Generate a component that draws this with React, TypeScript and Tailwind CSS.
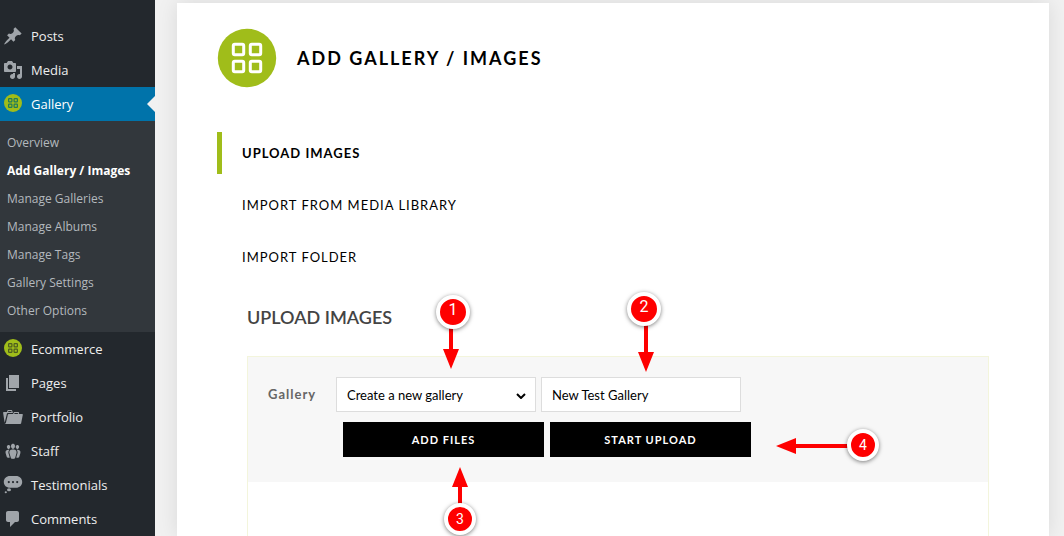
import React from 'react';
import clsx from 'clsx';

const paths = {
    pin: 'M10.44 3.02l1.82-1.82 6.36 6.35-1.83 1.82c-1.05-.68-2.48-.57-3.41.36l-.75.75c-.92.93-1.04 2.35-.35 3.41l-1.83 1.82-2.41-2.41-2.8 2.79c-.42.42-3.38 2.71-3.8 2.29s1.86-3.39 2.28-3.81l2.79-2.79L4.1 9.36l1.83-1.82c1.05.69 2.48.57 3.4-.36l.75-.75c.93-.92 1.05-2.35.36-3.41z',
    media: 'M13 11V4c0-.55-.45-1-1-1h-1.67L9 1H5L3.67 3H2c-.55 0-1 .45-1 1v7c0 .55.45 1 1 1h10c.55 0 1-.45 1-1zM7 4.5c1.38 0 2.5 1.12 2.5 2.5S8.38 9.5 7 9.5 4.5 8.38 4.5 7 5.62 4.5 7 4.5zM14 6h5v10.5c0 1.38-1.12 2.5-2.5 2.5S14 17.88 14 16.5s1.12-2.5 2.5-2.5c.17 0 .34.02.5.05V9h-3V6zm-4 8.05V13h2v3.5c0 1.38-1.12 2.5-2.5 2.5S7 17.88 7 16.5 8.12 14 9.5 14c.17 0 .34.02.5.05z',
    pages: 'M6 15V2h10v13H6zm-1 1h8v2H3V5h2v11z',
    portfolio: 'M4 5H.78c-.37 0-.74.32-.69.84l1.56 9.99S3.5 8.47 3.86 6.7c.11-.53.61-.7.98-.7H10s-.7-2.08-.77-2.31C9.11 3.25 8.89 3 8.45 3H5.14c-.36 0-.7.23-.8.64C4.25 4.04 4 5 4 5zm4.88 0h-4s.42-1 .87-1h2.13c.48 0 1 1 1 1zM2.67 16.25c-.31.47-.76.75-1.26.75h15.73c.54 0 .92-.31 1.03-.83.44-2.19 1.68-8.44 1.68-8.44.07-.5-.3-.73-.62-.73H16V5.53c0-.16-.26-.53-.66-.53h-3.76c-.52 0-.87.58-.87.58L10 7H5.59c-.32 0-.63.19-.69.5 0 0-1.59 6.7-1.72 7.33-.07.37-.22.99-.51 1.42zM15.38 7H11s.58-1 1.13-1h2.29c.71 0 .96 1 .96 1z',
    staff: 'M8.03 4.46c-.29 1.28.55 3.46 1.97 3.46 1.41 0 2.25-2.18 1.96-3.46-.22-.98-1.08-1.63-1.96-1.63-.89 0-1.74.65-1.97 1.63zm-4.13.9c-.25 1.08.47 2.93 1.67 2.93s1.92-1.85 1.67-2.93c-.19-.83-.92-1.39-1.67-1.39s-1.48.56-1.67 1.39zm8.86 0c-.25 1.08.47 2.93 1.66 2.93 1.2 0 1.92-1.85 1.67-2.93-.19-.83-.92-1.39-1.67-1.39-.74 0-1.47.56-1.66 1.39zm-.59 11.43l1.25-4.3C14.2 10 12.71 8.47 10 8.47c-2.72 0-4.21 1.53-3.44 4.02l1.26 4.3C8.05 17.51 9 18 10 18c.98 0 1.94-.49 2.17-1.21zm-6.1-7.63c-.49.67-.96 1.83-.42 3.59l1.12 3.79c-.34.2-.77.31-1.2.31-.85 0-1.65-.41-1.85-1.03l-1.07-3.65c-.65-2.11.61-3.4 2.92-3.4.27 0 .54.02.79.06-.1.1-.2.22-.29.33zm8.35-.39c2.31 0 3.58 1.29 2.92 3.4l-1.07 3.65c-.2.62-1 1.03-1.85 1.03-.43 0-.86-.11-1.2-.31l1.11-3.77c.55-1.78.08-2.94-.42-3.61-.08-.11-.18-.23-.28-.33.25-.04.51-.06.79-.06z',
    testimonials: 'M7 1h6c3.6 0 6.2 2.6 6.2 6S16.600 12.800 13 12.800H7C3.400 12.800.8 10.400.8 7S3.400 1 7 1zM5.800 6a1.100 1.100 0 1 0 0 2.200 1.100 1.100 0 0 0 0-2.200zm4.200 0a1.100 1.100 0 1 0 0 2.200 1.100 1.100 0 0 0 0-2.200zm4.200 0a1.100 1.100 0 1 0 0 2.200 1.100 1.100 0 0 0 0-2.200zM6 13.300a2 1.500 0 1 0 0 3 2 1.500 0 0 0 0-3zM2.800 16.200a1.100 1 0 1 0 0 2 1.100 1 0 0 0 0-2z',
    comments: 'M5 2h9c1.1 0 2 .9 2 2v7c0 1.1-.9 2-2 2h-2l-5 5v-5H5c-1.1 0-2-.9-2-2V4c0-1.1.9-2 2-2z',
};

type IconName = keyof typeof paths | 'grid';

const MenuIcon = ({ name, active }: { name: IconName; active?: boolean }) => {
    if (name === 'grid') {
        return (
            <svg viewBox="0 0 20 20" className="w-5 h-5 shrink-0" aria-hidden="true">
                <circle cx="10" cy="9" r="9" fill="#a0bd1a" />
                <g fill="none" stroke={active ? '#1f7a5c' : '#4d5c20'} strokeWidth="1.2">
                    <rect x="5.6" y="4.6" width="3.3" height="3.3" rx="0.6" />
                    <rect x="11.1" y="4.6" width="3.3" height="3.3" rx="0.6" />
                    <rect x="5.6" y="10.1" width="3.3" height="3.3" rx="0.6" />
                    <rect x="11.1" y="10.1" width="3.3" height="3.3" rx="0.6" />
                </g>
            </svg>
        );
    }
    return (
        <svg viewBox="0 0 20 20" className="w-5 h-5 shrink-0 fill-[#a0a5aa]" aria-hidden="true">
            <path d={paths[name]} fillRule="evenodd" />
        </svg>
    );
};

const menu: { label: string; icon: IconName; sub?: string[] }[] = [
    { label: 'Posts', icon: 'pin' },
    { label: 'Media', icon: 'media' },
    {
        label: 'Gallery',
        icon: 'grid',
        sub: ['Overview', 'Add Gallery / Images', 'Manage Galleries', 'Manage Albums', 'Manage Tags', 'Gallery Settings', 'Other Options'],
    },
    { label: 'Ecommerce', icon: 'grid' },
    { label: 'Pages', icon: 'pages' },
    { label: 'Portfolio', icon: 'portfolio' },
    { label: 'Staff', icon: 'staff' },
    { label: 'Testimonials', icon: 'testimonials' },
    { label: 'Comments', icon: 'comments' },
];

const Sidebar = () => (
    <nav className="w-[155px] shrink-0 bg-[#23282d] pt-[19px] font-['Open_Sans',sans-serif]">
        <ul>
            {menu.map(m => (
                <li key={m.label}>
                    <a
                        href="#"
                        className={clsx('relative flex items-center gap-2 h-[34px] pl-[3px] text-[13px] font-medium', m.sub ? 'bg-[#0073aa] text-white' : 'text-[#eee]')}
                    >
                        <MenuIcon name={m.icon} active={!!m.sub} />
                        <span className="pt-[2px]">{m.label}</span>
                        {m.sub && <span className="absolute right-0 top-[9px] border-y-8 border-r-8 border-y-transparent border-r-[#f1f1f1]" />}
                    </a>
                    {m.sub && (
                        <ul className="bg-[#32373c] pt-[7px] pb-2">
                            {m.sub.map(s => (
                                <li key={s}>
                                    <a
                                        href="#"
                                        className={clsx('flex items-center h-7 pt-[2px] pl-[7px] text-[12px]', s === 'Add Gallery / Images' ? 'font-bold text-white' : 'font-medium text-[#b4b9be]')}
                                    >
                                        {s}
                                    </a>
                                </li>
                            ))}
                        </ul>
                    )}
                </li>
            ))}
        </ul>
    </nav>
);

const arrows = {
    down: 'M-2 0h4v-60h-4zM-8 0H8L0 20z',
    up: 'M-2 0h4v60h-4zM-8 0H8L0-20z',
    left: 'M0-2v4h60v-4zM0-8V8L-20 0z',
};

// Numbered marker with an arrow that points at a control
const Callout = ({ n, dir, className, arrowClass, viewBox, small }: {
    n: number; dir: keyof typeof arrows; className: string; arrowClass: string; viewBox: string; small?: boolean;
}) => (
    <div className={clsx('absolute pointer-events-none', className)}>
        <svg viewBox={viewBox} className={clsx('absolute fill-[#fe0000]', arrowClass)} aria-hidden="true">
            <path d={arrows[dir]} />
        </svg>
        <span
            className={clsx(
                "relative flex items-center justify-center rounded-full border-4 border-white bg-[#fe0000] font-['Roboto',sans-serif] text-white shadow-[0_1px_4px_rgba(0,0,0,0.5)]",
                small ? 'w-8 h-8 text-[14px] leading-none' : 'w-[34px] h-[34px] text-[16px] leading-none pb-1'
            )}
        >
            {n}
        </span>
    </div>
);

const Header = () => (
    <header className="flex items-center gap-5 pl-10">
        <svg viewBox="0 0 60 60" className="w-[60px] h-[60px]" aria-hidden="true">
            <circle cx="30" cy="30" r="29.2" fill="#a0bd1a" />
            <g fill="none" stroke="#fff" strokeWidth="3">
                <rect x="16.3" y="16.3" width="10.4" height="10.4" rx="1.5" />
                <rect x="33.3" y="16.3" width="10.4" height="10.4" rx="1.5" />
                <rect x="16.3" y="33.3" width="10.4" height="10.4" rx="1.5" />
                <rect x="33.3" y="33.3" width="10.4" height="10.4" rx="1.5" />
            </g>
        </svg>
        <h1 className="text-[18px] font-bold tracking-[2px] uppercase text-black">Add Gallery / Images</h1>
    </header>
);

const tabs = ['Upload Images', 'Import from Media Library', 'Import Folder'];

const UploadForm = () => (
    <form className="flex items-start bg-[#f7f7f7] pt-5 pb-[25px] pl-5" onSubmit={e => e.preventDefault()}>
        <label htmlFor="gallery" className="w-[68px] leading-[35px] text-[13px] font-bold tracking-[1px] text-[#666]">Gallery</label>
        <div>
            <div className="flex gap-[5px]">
                <div className="relative">
                    <select id="gallery" className="appearance-none block w-[200px] h-[35px] border border-[#ddd] bg-white pt-[2px] pl-[10px] pr-8 text-[13px] text-black">
                        <option>Create a new gallery</option>
                    </select>
                    <svg viewBox="0 0 10 6" className="absolute right-[10px] top-4 w-[10px] h-[6px] pointer-events-none" aria-hidden="true">
                        <path d="M1 1l4 4 4-4" fill="none" stroke="#000" strokeWidth="2" />
                    </svg>
                </div>
                <input
                    type="text"
                    aria-label="Gallery name"
                    defaultValue="New Test Gallery"
                    className="w-[200px] h-[35px] border border-[#ddd] bg-white px-[10px] text-[13px] text-black"
                />
            </div>
            <div className="flex gap-[6px] mt-[10px] pl-[7px]">
                {['Add Files', 'Start Upload'].map(b => (
                    <button key={b} type="button" className="w-[201px] h-[35px] pt-[2px] bg-black text-[11px] font-bold tracking-[1px] uppercase text-white">{b}</button>
                ))}
            </div>
        </div>
    </form>
);

export default function App() {
    return (
        <div className="flex min-h-screen bg-[#f1f1f1] font-['Lato',sans-serif]">
            <Sidebar />
            <main className="flex flex-1 min-w-0 pt-[3px] pl-[22px] pr-[15px]">
                <div className="relative flex flex-1 flex-col bg-white pt-[25px] shadow-[0_0_20px_rgba(0,0,0,0.1)]">
                    <Header />
                    <ul className="flex flex-col gap-[10px] mt-11 pl-10">
                        {tabs.map((t, i) => (
                            <li key={t}>
                                <a
                                    href="#"
                                    className={clsx('flex items-center h-[42px] border-l-[5px] pt-[2px] pl-5 text-[13px] tracking-[1px] uppercase text-black', i === 0 ? 'border-[#a0bd1a] font-bold' : 'border-transparent')}
                                >
                                    {t}
                                </a>
                            </li>
                        ))}
                    </ul>
                    <section className="flex flex-1 flex-col pl-[70px] pr-[60px] mt-[27px]">
                        <h2 className="text-[18px] leading-6 font-semibold uppercase text-[#444]">Upload Images</h2>
                        <div className="flex-1 mt-[27px] border border-b-0 border-[#f3f5dc]">
                            <UploadForm />
                        </div>
                    </section>

                    <Callout n={1} dir="down" className="left-[259px] top-[292px]" arrowClass="left-[7px] top-[30px] w-4 h-11" viewBox="-8 -24 16 44" />
                    <Callout n={2} dir="down" className="left-[450px] top-[289px]" arrowClass="left-[11px] top-[30px] w-4 h-[50px]" viewBox="-8 -30 16 50" />
                    <Callout n={3} dir="up" small className="left-[267px] top-[500px]" arrowClass="left-2 -top-9 w-4 h-10" viewBox="-8 -20 16 40" />
                    <Callout n={4} dir="left" small className="left-[670px] top-[426px]" arrowClass="-left-[71px] top-[9px] w-[75px] h-4" viewBox="-20 -8 75 16" />
                </div>
            </main>
        </div>
    );
}
